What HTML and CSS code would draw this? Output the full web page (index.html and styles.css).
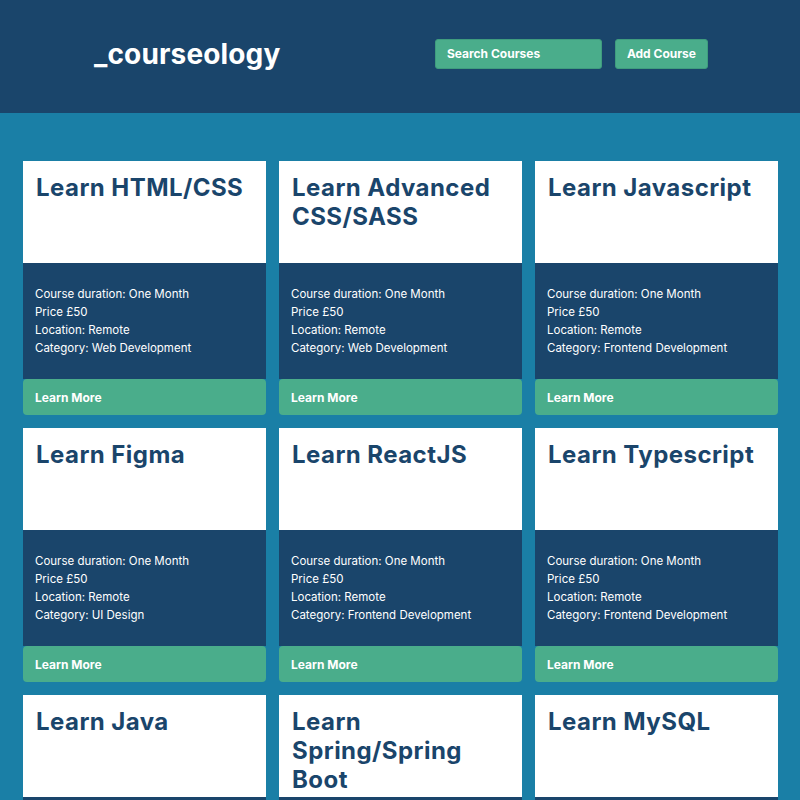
FILE: index.html
```html
<!DOCTYPE html>
<html lang="en">
<head>
<meta charset="utf-8">
<title>courseology</title>
<link rel="stylesheet" href="styles.css">
</head>
<body>
<header class="header">
  <h1 class="logo">_courseology</h1>
  <nav class="actions">
    <button class="btn btn-search">Search Courses</button>
    <button class="btn">Add Course</button>
  </nav>
</header>
<main class="grid">
  <article class="card">
    <h2 class="card-title">Learn HTML/CSS</h2>
    <div class="card-body"><p>Course duration: One Month</p><p>Price £50</p><p>Location: Remote</p><p>Category: Web Development</p></div>
    <button class="card-btn">Learn More</button>
  </article>
  <article class="card">
    <h2 class="card-title">Learn Advanced CSS/SASS</h2>
    <div class="card-body"><p>Course duration: One Month</p><p>Price £50</p><p>Location: Remote</p><p>Category: Web Development</p></div>
    <button class="card-btn">Learn More</button>
  </article>
  <article class="card">
    <h2 class="card-title">Learn Javascript</h2>
    <div class="card-body"><p>Course duration: One Month</p><p>Price £50</p><p>Location: Remote</p><p>Category: Frontend Development</p></div>
    <button class="card-btn">Learn More</button>
  </article>
  <article class="card">
    <h2 class="card-title">Learn Figma</h2>
    <div class="card-body"><p>Course duration: One Month</p><p>Price £50</p><p>Location: Remote</p><p>Category: UI Design</p></div>
    <button class="card-btn">Learn More</button>
  </article>
  <article class="card">
    <h2 class="card-title">Learn ReactJS</h2>
    <div class="card-body"><p>Course duration: One Month</p><p>Price £50</p><p>Location: Remote</p><p>Category: Frontend Development</p></div>
    <button class="card-btn">Learn More</button>
  </article>
  <article class="card">
    <h2 class="card-title">Learn Typescript</h2>
    <div class="card-body"><p>Course duration: One Month</p><p>Price £50</p><p>Location: Remote</p><p>Category: Frontend Development</p></div>
    <button class="card-btn">Learn More</button>
  </article>
  <article class="card">
    <h2 class="card-title">Learn Java</h2>
    <div class="card-body"><p>Course duration: One Month</p><p>Price £50</p><p>Location: Remote</p><p>Category: Backend Development</p></div>
    <button class="card-btn">Learn More</button>
  </article>
  <article class="card">
    <h2 class="card-title">Learn Spring/Spring Boot</h2>
    <div class="card-body"><p>Course duration: One Month</p><p>Price £50</p><p>Location: Remote</p><p>Category: Backend Development</p></div>
    <button class="card-btn">Learn More</button>
  </article>
  <article class="card">
    <h2 class="card-title">Learn MySQL</h2>
    <div class="card-body"><p>Course duration: One Month</p><p>Price £50</p><p>Location: Remote</p><p>Category: Backend Development</p></div>
    <button class="card-btn">Learn More</button>
  </article>
</main>
</body>
</html>
```
FILE: styles.css
```css
* { box-sizing: border-box; }
html, body { margin: 0; padding: 0; }
body {
  font-family: Inter, "Noto Sans", sans-serif;
  background: #1a7fa6;
}
.header {
  background: #1a456b;
  height: 113px;
  display: flex;
  align-items: center;
  justify-content: space-between;
  padding: 0 92px 6px 94px;
}
.logo {
  margin: 0;
  color: #fff;
  font-size: 28px;
  font-weight: 700;
  letter-spacing: 0.15px;
}
.actions { display: flex; gap: 13px; }
.btn {
  font-family: inherit;
  background: #4aad8b;
  color: #fff;
  border: 1px solid #3f9c7e;
  border-radius: 3px;
  height: 30px;
  padding: 0 11px;
  font-size: 12px;
  font-weight: 700;
  text-align: left;
}
.btn-search { width: 167px; }
.grid {
  display: grid;
  grid-template-columns: repeat(3, 243px);
  column-gap: 13px;
  row-gap: 13px;
  padding: 48px 22px 0 23px;
}
.card {
  display: flex;
  flex-direction: column;
}
.card-title {
  margin: 0;
  background: #fff;
  color: #1a456b;
  height: 102px;
  padding: 12px 12px 0 13px;
  font-size: 24px;
  line-height: 29px;
  font-weight: 700;
  letter-spacing: 0.45px;
}
.card-body {
  background: #1a456b;
  color: #fff;
  padding: 22px 12px 22px;
  font-size: 11.5px;
  line-height: 18px;
}
.card-body p { margin: 0; }
.card-btn {
  font-family: inherit;
  background: #4aad8b;
  color: #fff;
  border: none;
  border-radius: 4px;
  height: 36px;
  padding: 0 12px;
  text-align: left;
  font-size: 12px;
  font-weight: 700;
}
```
